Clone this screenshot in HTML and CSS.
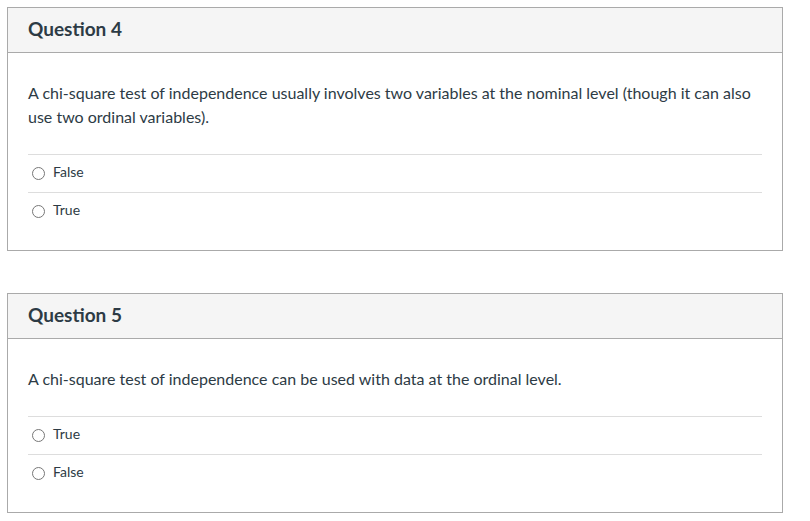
FILE: index.html
```html
<!DOCTYPE html>
<html>
<head>
<meta charset="utf-8">
<link rel="stylesheet" href="styles.css">
</head>
<body>
<div class="quiz">
  <div class="card">
    <div class="card-header"><h2 class="title">Question 4</h2></div>
    <div class="card-body">
      <p class="question">A chi-square test of independence usually involves two variables at the nominal level (though it can also use two ordinal variables).</p>
      <ul class="answers">
        <li class="answer"><span class="radio"></span><span class="label">False</span></li>
        <li class="answer"><span class="radio"></span><span class="label">True</span></li>
      </ul>
    </div>
  </div>
  <div class="card">
    <div class="card-header"><h2 class="title">Question 5</h2></div>
    <div class="card-body">
      <p class="question">A chi-square test of independence can be used with data at the ordinal level.</p>
      <ul class="answers">
        <li class="answer"><span class="radio"></span><span class="label">True</span></li>
        <li class="answer"><span class="radio"></span><span class="label">False</span></li>
      </ul>
    </div>
  </div>
</div>
</body>
</html>
```
FILE: styles.css
```css
html, body { margin: 0; padding: 0; background: #fff; }
body {
  font-family: Lato, "Open Sans", sans-serif;
  color: #2d3b45;
  padding: 7px;
}
.quiz { display: flex; flex-direction: column; gap: 42px; width: 776px; }
.card { border: 1px solid #aaaaaa; box-sizing: border-box; }
.card-header {
  background: #f5f5f5;
  border-bottom: 1px solid #aaaaaa;
  height: 45px;
  box-sizing: border-box;
  display: flex;
  align-items: center;
  padding: 0 20px 4px 20px;
}
.title { margin: 0; font-size: 19px; font-weight: 700; }
.card-body { padding: 28px 20px 20px 20px; }
.question { margin: 0 0 25px 0; font-size: 16px; line-height: 24px; }
.answers { list-style: none; margin: 0; padding: 0; }
.answer {
  border-top: 1px solid #dddddd;
  height: 37px;
  box-sizing: content-box;
  display: flex;
  align-items: center;
  padding-left: 4px;
}
.radio {
  width: 11px; height: 11px;
  border: 1px solid #777;
  border-radius: 50%;
  margin-right: 8px;
  margin-top: 0;
}
.label { font-size: 14px; margin-bottom: 4px; }
```
